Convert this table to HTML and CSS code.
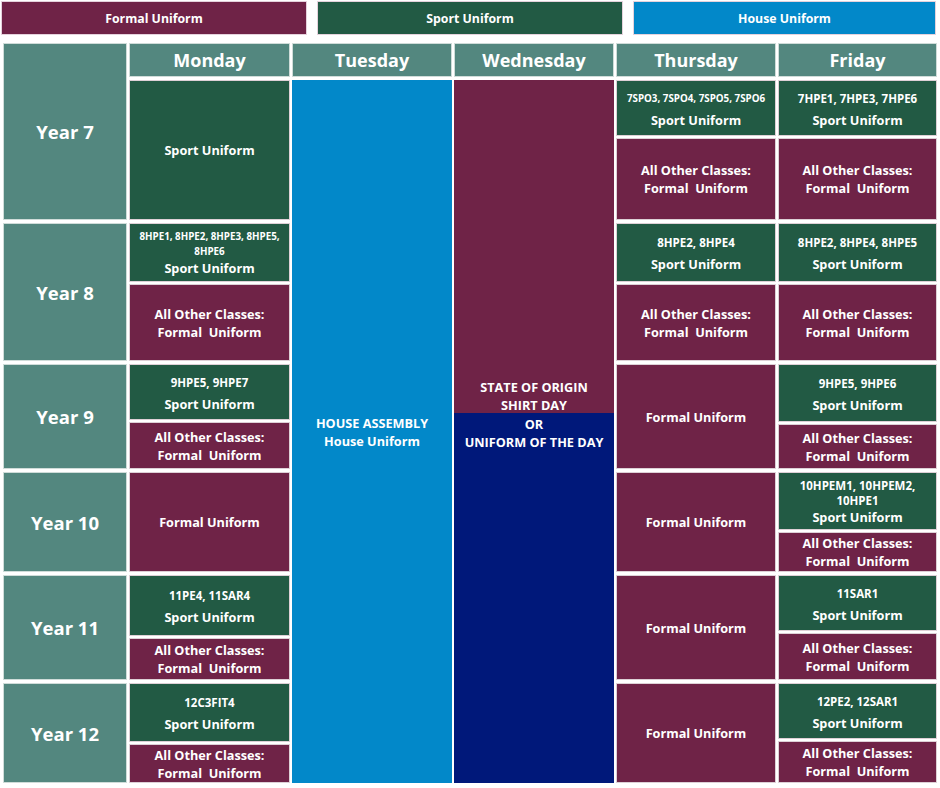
FILE: index.html
```html
<!DOCTYPE html>
<html>
<head>
<meta charset="utf-8">
<link rel="stylesheet" href="styles.css">
</head>
<body>
<div class="page">
  <div class="legend">
    <div class="leg formal w306">Formal Uniform</div>
    <div class="leg sport w306">Sport Uniform</div>
    <div class="leg house w303">House Uniform</div>
  </div>
  <div class="table">
    <div class="cell teal yearhead r1-3"><span class="year">Year 7</span></div>
    <div class="cell teal day">Monday</div>
    <div class="cell teal day">Tuesday</div>
    <div class="cell teal day">Wednesday</div>
    <div class="cell teal day">Thursday</div>
    <div class="cell teal day">Friday</div>

    <!-- Year 7 -->
    <div class="cell sport"><div class="lbl">Sport Uniform</div></div>
    <div class="cell house tuesday">
      <div class="lbl">HOUSE ASSEMBLY</div>
      <div class="lbl">House Uniform</div>
    </div>
    <div class="cell wednesday">
      <div class="lbl">STATE OF ORIGIN</div>
      <div class="lbl">SHIRT DAY</div>
      <div class="lbl">OR</div>
      <div class="lbl">UNIFORM OF THE DAY</div>
    </div>
    <div class="split">
      <div class="cell sport h56 coded"><div class="codes xs">7SPO3, 7SPO4, 7SPO5, 7SPO6</div><div class="lbl">Sport Uniform</div></div>
      <div class="cell formal grow"><div class="lbl">All Other Classes:</div><div class="lbl">Formal&nbsp; Uniform</div></div>
    </div>
    <div class="split">
      <div class="cell sport h56 coded"><div class="codes">7HPE1, 7HPE3, 7HPE6</div><div class="lbl">Sport Uniform</div></div>
      <div class="cell formal grow"><div class="lbl">All Other Classes:</div><div class="lbl">Formal&nbsp; Uniform</div></div>
    </div>

    <!-- Year 8 -->
    <div class="cell teal"><span class="year">Year 8</span></div>
    <div class="split">
      <div class="cell sport h59"><div class="codes xs tight">8HPE1, 8HPE2, 8HPE3, 8HPE5,<br>8HPE6</div><div class="lbl tight">Sport Uniform</div></div>
      <div class="cell formal grow"><div class="lbl">All Other Classes:</div><div class="lbl">Formal&nbsp; Uniform</div></div>
    </div>
    <div class="split">
      <div class="cell sport h59 coded"><div class="codes">8HPE2, 8HPE4</div><div class="lbl">Sport Uniform</div></div>
      <div class="cell formal grow"><div class="lbl">All Other Classes:</div><div class="lbl">Formal&nbsp; Uniform</div></div>
    </div>
    <div class="split">
      <div class="cell sport h59 coded"><div class="codes">8HPE2, 8HPE4, 8HPE5</div><div class="lbl">Sport Uniform</div></div>
      <div class="cell formal grow"><div class="lbl">All Other Classes:</div><div class="lbl">Formal&nbsp; Uniform</div></div>
    </div>

    <!-- Year 9 -->
    <div class="cell teal"><span class="year">Year 9</span></div>
    <div class="split">
      <div class="cell sport h56 coded"><div class="codes">9HPE5, 9HPE7</div><div class="lbl">Sport Uniform</div></div>
      <div class="cell formal grow"><div class="lbl">All Other Classes:</div><div class="lbl">Formal&nbsp; Uniform</div></div>
    </div>
    <div class="cell formal"><div class="lbl">Formal Uniform</div></div>
    <div class="split">
      <div class="cell sport h58 coded"><div class="codes">9HPE5, 9HPE6</div><div class="lbl">Sport Uniform</div></div>
      <div class="cell formal grow"><div class="lbl">All Other Classes:</div><div class="lbl">Formal&nbsp; Uniform</div></div>
    </div>

    <!-- Year 10 -->
    <div class="cell teal"><span class="year">Year 10</span></div>
    <div class="cell formal"><div class="lbl">Formal Uniform</div></div>
    <div class="cell formal"><div class="lbl">Formal Uniform</div></div>
    <div class="split">
      <div class="cell sport h58"><div class="codes tight">10HPEM1, 10HPEM2,<br>10HPE1</div><div class="lbl tight">Sport Uniform</div></div>
      <div class="cell formal grow"><div class="lbl">All Other Classes:</div><div class="lbl">Formal&nbsp; Uniform</div></div>
    </div>

    <!-- Year 11 -->
    <div class="cell teal"><span class="year">Year 11</span></div>
    <div class="split">
      <div class="cell sport h61 coded"><div class="codes">11PE4, 11SAR4</div><div class="lbl">Sport Uniform</div></div>
      <div class="cell formal grow"><div class="lbl">All Other Classes:</div><div class="lbl">Formal&nbsp; Uniform</div></div>
    </div>
    <div class="cell formal"><div class="lbl">Formal Uniform</div></div>
    <div class="split">
      <div class="cell sport h56 coded"><div class="codes">11SAR1</div><div class="lbl">Sport Uniform</div></div>
      <div class="cell formal grow"><div class="lbl">All Other Classes:</div><div class="lbl">Formal&nbsp; Uniform</div></div>
    </div>

    <!-- Year 12 -->
    <div class="cell teal"><span class="year">Year 12</span></div>
    <div class="split">
      <div class="cell sport h59 coded"><div class="codes">12C3FIT4</div><div class="lbl">Sport Uniform</div></div>
      <div class="cell formal grow"><div class="lbl">All Other Classes:</div><div class="lbl">Formal&nbsp; Uniform</div></div>
    </div>
    <div class="cell formal"><div class="lbl">Formal Uniform</div></div>
    <div class="split">
      <div class="cell sport h56 coded"><div class="codes">12PE2, 12SAR1</div><div class="lbl">Sport Uniform</div></div>
      <div class="cell formal grow"><div class="lbl">All Other Classes:</div><div class="lbl">Formal&nbsp; Uniform</div></div>
    </div>
  </div>
</div>
</body>
</html>
```

FILE: styles.css
```css
* { box-sizing: border-box; }
html, body { margin: 0; padding: 0; background: #ffffff; }
body {
  font-family: "Open Sans", "Liberation Sans", sans-serif;
  font-weight: 700;
  color: #ffffff;
  width: 940px;
  height: 788px;
  overflow: hidden;
}
.page { padding: 1px 0 0 1px; }

.legend {
  display: flex;
  gap: 10px;
  height: 34px;
}
.leg {
  display: flex;
  align-items: center;
  justify-content: center;
  font-size: 12.3px;
  border: 1px solid #e4d2dc;
}
.w306 { width: 306px; }
.w303 { width: 303px; }

.table {
  margin: 8px 0 0 2px;
  display: grid;
  grid-template-columns: 124px 161px 160px 160px 160px 159px;
  grid-template-rows: 34px 140px 138px 105px 100px 105px 100px;
  column-gap: 2px;
  row-gap: 3px;
}

.cell {
  display: flex;
  flex-direction: column;
  align-items: center;
  justify-content: center;
  text-align: center;
  border: 1px solid #ddd0d6;
}
.teal { background: #53877f; border-color: #cfdcd9; }
.formal { background: #6f2347; }
.sport { background: #225a44; }
.house { background: #0288c9; }

.day { font-size: 18px; }
.year { font-size: 18.5px; }
.yearhead { grid-row: 1 / 3; }

.tuesday { grid-column: 3; grid-row: 2 / 8; border: none; }
.wednesday {
  grid-column: 4;
  grid-row: 2 / 8;
  border: none;
  padding-bottom: 34px;
  background: linear-gradient(to bottom, #6f2347 0, #6f2347 333px, #00187a 333px, #00187a 100%);
}
.wednesday .lbl { line-height: 18.5px; }

.lbl { font-size: 12.7px; line-height: 18px; }
.codes { font-size: 11.5px; line-height: 14px; margin-bottom: 5px; }
.coded { padding-top: 4px; }
.codes.xs { font-size: 9.8px; }
.codes.tight { margin-bottom: 1px; line-height: 15px; }
.lbl.tight { line-height: 16px; }

.split {
  display: flex;
  flex-direction: column;
  gap: 2px;
}
.split .cell { flex: none; }
.split .grow { flex: 1; }
.h56 { height: 56px; }
.h58 { height: 58px; }
.h59 { height: 59px; }
.h61 { height: 61px; }
```
